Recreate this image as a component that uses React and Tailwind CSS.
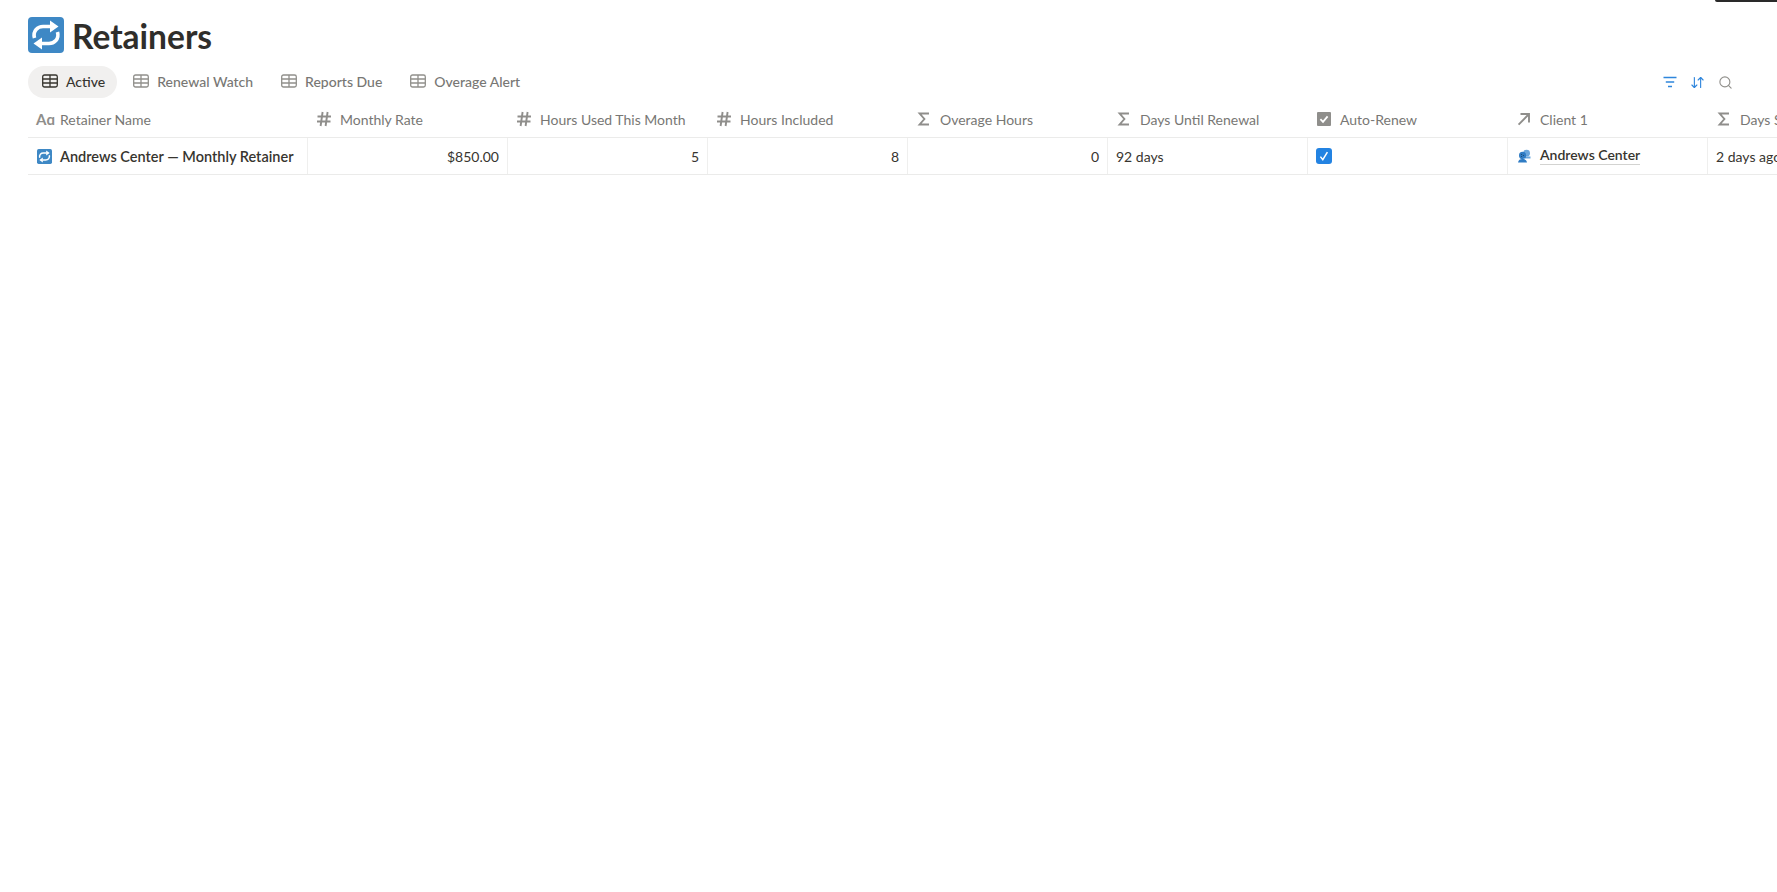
import React from 'react'
import { ArrowDownUp, Search } from 'lucide-react'

const font = { fontFamily: 'Lato, sans-serif' }

function RepeatIcon({ className }) {
  return (
    <svg viewBox="0 0 36 36" className={className}>
      <rect width="36" height="36" rx="4" fill="#3e88c5" />
      <path d="M6.5 21 C4.5 13.5 10 9.5 15 9.5 H23" fill="none" stroke="#fff" strokeWidth="3.6" />
      <path d="M22 3.5 L30.5 9.5 L22 15.5 Z" fill="#fff" />
      <path d="M29.5 15 C31.5 22.5 26 26.5 21 26.5 H13" fill="none" stroke="#fff" strokeWidth="3.6" />
      <path d="M14 20.5 L5.5 26.5 L14 32.5 Z" fill="#fff" />
    </svg>
  )
}

function TableIcon({ active }) {
  const c = active ? '#37352f' : '#91908c'
  return (
    <svg viewBox="0 0 16 14" className="w-4 h-[14px] shrink-0" fill="none" stroke={c} strokeWidth="1.3">
      <rect x="0.7" y="1" width="14.6" height="12" rx="1.8" />
      <path d="M0.7 5H15.3M0.7 9H15.3M8 1V13" />
    </svg>
  )
}

function HashIcon() {
  return (
    <svg viewBox="0 0 16 16" className="w-4 h-4" fill="none" stroke="#8f8e8b" strokeWidth="1.9">
      <path d="M1.5 5.5H15M1 10.5H14.5M6.6 1L4.6 15M11.6 1L9.6 15" />
    </svg>
  )
}

function SigmaIcon() {
  return (
    <svg viewBox="0 0 16 16" className="w-4 h-4" fill="none" stroke="#8f8e8b" strokeWidth="1.9">
      <path d="M13 2.5H3.6L8.4 8L3.6 13.5H13" />
    </svg>
  )
}

function RelationIcon() {
  return (
    <svg viewBox="0 0 16 16" className="w-4 h-4" fill="none" stroke="#8f8e8b" strokeWidth="1.9">
      <path d="M4.5 3H13V11.5M13 3L2.6 13.6" />
    </svg>
  )
}

function CheckHeadIcon() {
  return (
    <svg viewBox="0 0 14 14" className="w-[14px] h-[14px]">
      <rect width="14" height="14" rx="1" fill="#8f8e8b" />
      <path d="M3.4 7.2 L6 9.8 L10.6 4.4" fill="none" stroke="#fff" strokeWidth="1.8" />
    </svg>
  )
}

function FilterIcon() {
  return (
    <svg viewBox="0 0 14 12" className="w-[14px] h-3" fill="none" stroke="#2f86dc" strokeWidth="1.3">
      <path d="M0.5 1.5H13.5M2.8 6H11.2M5 10.5H9" />
    </svg>
  )
}

function ClientIcon() {
  return (
    <svg viewBox="0 0 14 14" className="w-[14px] h-[14px] shrink-0">
      <circle cx="9.6" cy="4.2" r="3.4" fill="#6aa6dc" />
      <path d="M7 7.5H13.5V9.5H8Z" fill="#6aa6dc" />
      <circle cx="5.6" cy="6.4" r="3.6" fill="#2f7cc4" />
      <path d="M1 13.6C1.4 11 3 10 5.5 10S9.6 11 10 13.6Z" fill="#2f7cc4" />
      <circle cx="4.6" cy="5.4" r="0.5" fill="#1d3a55" />
      <circle cx="6.4" cy="6.4" r="0.5" fill="#1d3a55" />
      <circle cx="4.6" cy="7.6" r="0.5" fill="#1d3a55" />
    </svg>
  )
}

const tabs = ['Active', 'Renewal Watch', 'Reports Due', 'Overage Alert']

const columns = [
  { name: 'Retainer Name', width: 'w-[280px]', icon: <span className="w-4 text-[15px] font-bold leading-none text-[#8f8e8b] whitespace-nowrap">Aɑ</span> },
  { name: 'Monthly Rate', width: 'w-[200px]', icon: <HashIcon /> },
  { name: 'Hours Used This Month', width: 'w-[200px]', icon: <HashIcon /> },
  { name: 'Hours Included', width: 'w-[200px]', icon: <HashIcon /> },
  { name: 'Overage Hours', width: 'w-[200px]', icon: <SigmaIcon /> },
  { name: 'Days Until Renewal', width: 'w-[200px]', icon: <SigmaIcon /> },
  { name: 'Auto-Renew', width: 'w-[200px]', icon: <CheckHeadIcon /> },
  { name: 'Client 1', width: 'w-[200px]', icon: <RelationIcon /> },
  { name: 'Days Since Last Report', width: 'w-[200px]', icon: <SigmaIcon /> },
]

function NumCell({ value, width = 'w-[200px]' }) {
  return <div className={`${width} shrink-0 border-r border-[#efefee] px-2 flex items-center justify-end`}>{value}</div>
}

export default function App() {
  return (
    <div className="relative h-screen w-full overflow-hidden bg-white text-[#37352f]" style={font}>
      <div className="absolute top-0 right-0 w-[62px] h-[2px] rounded-bl-md bg-[#2a2a2a]" />

      <div className="pl-[28px] pt-[17px]">
        <div className="flex items-center gap-2 h-9">
          <RepeatIcon className="w-9 h-9 shrink-0" />
          <h1 className="text-[33.5px] font-bold leading-9 text-[#2f2e2b] mt-[2px]">Retainers</h1>
        </div>

        <div className="flex items-center mt-[13px] h-8 pr-[44px]">
          <div className="flex items-center gap-[2px] flex-1">
            {tabs.map((t, i) => (
              <div
                key={t}
                className={`flex items-center gap-2 h-8 pb-[2px] pr-3 pl-[14px] rounded-full text-[14px] font-medium ${i === 0 ? 'bg-[#f1f0ef] text-[#37352f]' : 'text-[#787774]'}`}
              >
                <TableIcon active={i === 0} />
                {t}
              </div>
            ))}
          </div>
          <div className="flex items-center gap-[13px]">
            <FilterIcon />
            <ArrowDownUp className="w-[15px] h-[15px] text-[#2f86dc]" strokeWidth={1.8} />
            <Search className="w-[15px] h-[15px] text-[#91908c]" strokeWidth={1.8} />
          </div>
        </div>

        <div className="mt-[7px] w-[1900px] text-[14px]">
          <div className="flex h-[33px] border-b border-[#ebebea] text-[#787774]">
            {columns.map(c => (
              <div key={c.name} className={`${c.width} shrink-0 flex items-center gap-2 px-2 pb-[4px]`}>
                <span className="flex justify-center w-4">{c.icon}</span>
                <span className="whitespace-nowrap">{c.name}</span>
              </div>
            ))}
          </div>
          <div className="flex h-[37px] border-b border-[#ebebea]">
            <div className="w-[280px] shrink-0 border-r border-[#efefee] px-2 flex items-center gap-2 font-semibold text-[14.5px]">
              <RepeatIcon className="w-[15px] h-[15px] ml-[1px] shrink-0" />
              <span className="whitespace-nowrap pt-[2px]">Andrews Center — Monthly Retainer</span>
            </div>
            <NumCell value="$850.00" />
            <NumCell value="5" />
            <NumCell value="8" />
            <NumCell value="0" />
            <div className="w-[200px] shrink-0 border-r border-[#efefee] px-2 flex items-center">92 days</div>
            <div className="w-[200px] shrink-0 border-r border-[#efefee] px-2 flex items-center">
              <span className="w-4 h-4 rounded-[3px] bg-[#2383e2] flex items-center justify-center">
                <svg viewBox="0 0 14 14" className="w-[14px] h-[14px]">
                  <path d="M3.4 7.6 L5.8 10.6 L10.4 3.2" fill="none" stroke="#fff" strokeWidth="1.5" />
                </svg>
              </span>
            </div>
            <div className="w-[200px] shrink-0 border-r border-[#efefee] px-2 flex items-center gap-2">
              <span className="flex justify-center w-4"><ClientIcon /></span>
              <span className="font-semibold border-b border-[#d3d3d1] leading-[19px] mb-[2px]">Andrews Center</span>
            </div>
            <div className="w-[200px] shrink-0 px-2 flex items-center whitespace-nowrap">2 days ago</div>
          </div>
        </div>
      </div>
    </div>
  )
}
